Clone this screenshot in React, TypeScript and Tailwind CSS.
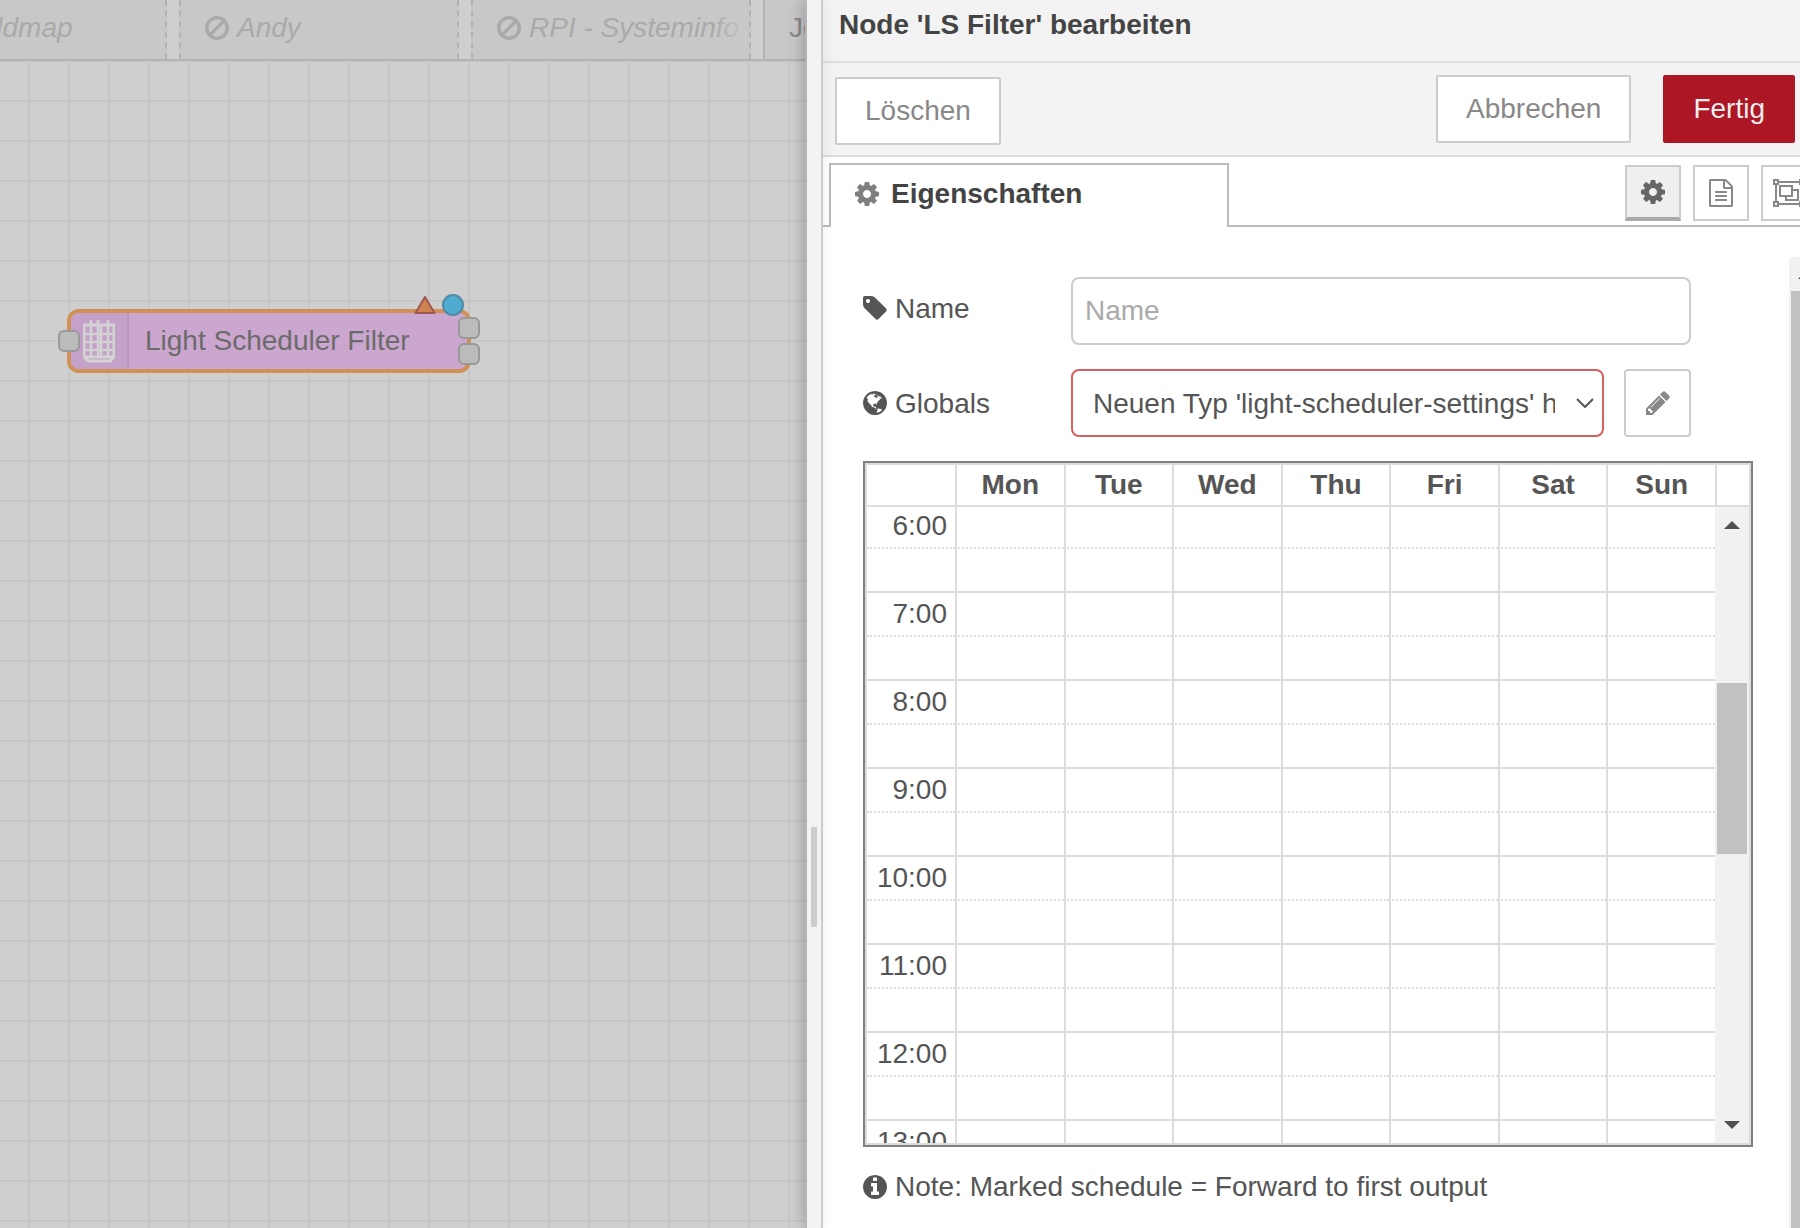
import React from 'react';

const days = ['Mon', 'Tue', 'Wed', 'Thu', 'Fri', 'Sat', 'Sun'];
const hours = ['6:00', '7:00', '8:00', '9:00', '10:00', '11:00', '12:00', '13:00'];

// Font Awesome 4 glyphs
const paths = {
  cog: 'M1152 896q0-106-75-181t-181-75-181 75-75 181 75 181 181 75 181-75 75-181zm512-109v222q0 12-8 23t-20 13l-185 28q-19 54-39 91 35 50 107 138 10 12 10 25t-9 23q-27 37-99 108t-94 71q-12 0-26-9l-138-108q-44 23-91 38-16 136-29 186-7 28-36 28h-222q-14 0-24.500-8.500t-11.500-21.500l-28-184q-49-16-90-37l-141 107q-10 9-25 9-14 0-25-11-126-114-165-168-7-10-7-23 0-12 8-23 15-21 51-66.500t54-70.500q-27-50-41-99l-183-27q-13-2-21-12.500t-8-23.500v-222q0-12 8-23t19-13l186-28q14-46 39-92-40-57-107-138-10-12-10-24 0-10 9-23 26-36 98.500-107.500t94.500-71.500q13 0 26 10l138 107q44-23 91-38 16-136 29-186 7-28 36-28h222q14 0 24.500 8.500t11.500 21.500l28 184q49 16 90 37l142-107q9-9 24-9 13 0 25 10 129 119 165 170 7 8 7 22 0 12-8 23-15 21-51 66.500t-54 70.500q26 50 41 98l183 28q13 2 21 12.500t8 23.500z',
  tag: 'M576 448q0-53-37.5-90.5t-90.5-37.5-90.5 37.5-37.5 90.5 37.5 90.5 90.5 37.5 90.5-37.5 37.5-90.5zm1067 576q0 53-37 90l-491 492q-39 37-91 37-53 0-90-37l-715-716q-38-37-64.5-101t-26.5-117v-416q0-52 38-90t90-38h416q53 0 117 26.5t102 64.5l715 714q37 39 37 91z',
  pencil: 'M491 1536l91-91-235-235-91 91v107h128v128h107zm523-928q0-22-22-22-10 0-17 7l-542 542q-7 7-7 17 0 22 22 22 10 0 17-7l542-542q7-7 7-17zm-54-192l416 416-832 832h-416v-416zm683 96q0 53-37 90l-166 166-416-416 166-165q36-38 90-38 53 0 91 38l235 234q37 39 37 91z',
  info: 'M1152 1376v-160q0-14-9-23t-23-9h-96v-512q0-14-9-23t-23-9h-320q-14 0-23 9t-9 23v160q0 14 9 23t23 9h96v320h-96q-14 0-23 9t-9 23v160q0 14 9 23t23 9h448q14 0 23-9t9-23zm-128-896v-160q0-14-9-23t-23-9h-192q-14 0-23 9t-9 23v160q0 14 9 23t23 9h192q14 0 23-9t9-23zm640 416q0 209-103 385.5t-279.5 279.5-385.5 103-385.5-103-279.5-279.5-103-385.5 103-385.5 279.5-279.5 385.5-103 385.5 103 279.5 279.5 103 385.5z',
  ban: 'M1440 893q0-161-87-295l-754 753q137 89 297 89 111 0 211.5-43.5t173.5-116.5 116-174.5 43-212.5zm-999 299l755-754q-135-91-300-91-148 0-273 73t-198 199-73 274q0 162 89 299zm1223-299q0 157-61 300t-163.5 246-245 164-298.5 61-298.5-61-245-164-163.5-246-61-300 61-299.5 163.5-245.5 245-164 298.5-61 298.5 61 245 164 163.5 245.5 61 299.5z',
  file: 'M1596 380q28 28 48 76t20 88v1152q0 40-28 68t-68 28h-1344q-40 0-68-28t-28-68v-1600q0-40 28-68t68-28h896q40 0 88 20t76 48zm-444-244v376h376q-10-29-22-41l-313-313q-12-12-41-22zm384 1528v-1024h-416q-40 0-68-28t-28-68v-416h-768v1536h1280zm-1024-864q0-14 9-23t23-9h704q14 0 23 9t9 23v64q0 14-9 23t-23 9h-704q-14 0-23-9t-9-23v-64zm736 224q14 0 23 9t9 23v64q0 14-9 23t-23 9h-704q-14 0-23-9t-9-23v-64q0-14 9-23t23-9h704zm0 256q14 0 23 9t9 23v64q0 14-9 23t-23 9h-704q-14 0-23-9t-9-23v-64q0-14 9-23t23-9h704z',
  globe: 'M896 128q209 0 385.5 103t279.5 279.5 103 385.5-103 385.5-279.5 279.5-385.5 103-385.5-103-279.5-279.5-103-385.5 103-385.5 279.5-279.5 385.5-103zm274 521q-2 1-9.5 9.5t-13.5 9.5q2 0 4.5-5t5-11 3.5-7q6-7 22-15 14-6 52-12 34-8 51 11-2-2 9.5-13t14.5-12q3-2 15-4.5t15-7.5l2-22q-12 1-17.5-7t-6.5-21q0 2-6 8 0-7-4.5-8t-11.5 1-9 1q-10-3-15-7.5t-8-16.5-4-15q-2-5-9.5-11t-9.5-10q-1-2-2.5-5.5t-3-6.5-4-5.5-5.5-2.5-7 5-7.5 10-4.5 5q-3-2-6-1.5t-4.5 1-4.5 3-5 3.5q-3 2-8.5 3t-8.5 2q15-5-1-11-10-4-16-3 9-4 7.5-12t-8.5-14h5q-1-4-8.5-8.5t-17.5-8.5-13-6q-8-5-34-9.5t-33-.5q-5 6-4.5 10.5t4 14 3.5 12.5q1 6-5.5 13t-6.5 12q0 7 14 15.5t10 21.5q-3 8-16 16t-16 12q-5 8-1.5 18.5t10.5 16.5q2 2 1.5 4t-3.5 4.5-5.5 4-6.5 3.5l-3 2q-11 5-20.5-6t-13.5-26q-7-25-16-30-23-8-29 1-5-13-41-26-25-9-58-4 6-1 0-15-7-15-19-12 3-6 4-17.5t1-13.5q3-13 12-23 1-1 7-8.5t9.5-13.5.5-6q35 4 50-11 5-5 11.5-17t10.5-17q9-6 14-5.5t14.5 5.5 14.5 5q14 1 15.5-11t-7.5-20q12 1 3-17-4-7-8-9-12-4-27 5-8 4 2 8-1-1-9.5 10.5t-16.5 17.5-16-5q-1-1-5.5-13.5t-9.5-13.5q-8 0-16 15 3-8-11-15t-24-8q19-12-8-27-7-4-20.5-5t-19.5 4q-5 7-5.5 11.5t5 8 10.5 5.5 11.5 4 8.5 3q14 10 8 14-2 1-8.5 3.5t-11.5 4.5-6 4q-3 4 0 14t-2 14q-5-5-9-17.5t-7-16.5q7 9-25 6l-10-1q-4 0-16 2t-20.5 1-13.5-8q-4-8 0-20 1-4 4-2-4-3-11-9.5t-10-8.5q-46 15-94 41 6 1 12-1 5-2 13-6.5t10-5.5q34-14 42-7l5-5q14 16 20 25-7-4-30-1-20 6-22 12 7 12 5 18-4-3-11.5-10t-14.5-11-15-5q-16 0-22 1-146 80-235 222 7 7 12 8 4 1 5 9t2.5 11 11.5-3q9 8 3 19 1-1 44 27 19 17 21 21 3 11-10 18-1-2-9-9t-9-4q-3 5 .5 18.5t10.5 12.5q-7 0-9.5 16t-2.5 35.5-1 23.5l2 1q-3 12 5.5 34.5t21.5 19.5q-13 3 20 43 6 8 8 9 3 2 12 7.5t15 10 10 10.5q4 5 10 22.5t14 23.5q-2 6 9.5 20t10.5 23q-1 0-2.5 1t-2.5 1q3 7 15.5 14t15.5 13q1 3 2 10t3 11 8 2q2-20-24-62-15-25-17-29-3-5-5.500-15.500t-4.500-14.500q2 0 6 1.500t8.500 3.500 7.500 4 2 3q-3 7 2 17.500t12 18.500 17 19 12 13q6 6 14 19.500t0 13.500q9 0 20 10.500t17 19.500q5 8 8 26t5 24q2 7 8.500 13.500t12.500 9.500l16 8 13 7q5 2 18.500 10.500t21.500 11.500q10 4 16 4t14.500-2.500 13.500-3.500q15-2 29 15t21 21q36 19 55 11-2 1 .5 7.500t8 15.500 9 14.500 5.500 8.500q5 6 18 15t18 15q6-4 7-9-3 8 7 20t18 10q14-3 14-32-31 15-49-18 0-1-2.500-5.500t-4-8.500-2.500-8.500 0-7.500 5-3q9 0 10-3.500t-2-12.500-4-13q-1-8-11-20t-12-15q-5 9-16 8t-16-9q0 1-1.500 5.500t-1.500 6.500q-13 0-15-1 1-3 2.500-17.500t3.500-22.500q1-4 5.500-12t7.500-14.500 4-12.500-4.500-9.500-17.500-2.500q-19 1-26 20-1 3-3 10.500t-5 11.500-9 7q-7 3-24 2t-24-5q-13-8-22.500-29t-9.500-37q0-10 2.500-26.500t3-25-5.500-24.500q3-2 9-9.500t10-10.500q2-1 4.500-1.500t4.500 0 4-1.500 3-6q-1-1-4-3-3-3-4-3 7 3 28.500-1.500t27.500 1.500q15 11 22-2 0-1-2.500-9.500t-.5-13.500q5 27 29 9 3 3 15.500 5t17.500 5q3 2 7 5.500t5.500 4.500 5-.5 8.500-6.500q10 14 12 24 11 40 19 44 7 3 11 2t4.500-9.500 0-14-1.500-12.500l-1-8v-18l-1-8q-15-3-18.500-12t1.500-18.500 15-18.500q1-1 8-3.500t15.500-6.500 12.500-8q21-19 15-35 7 0 11-9-1 0-5-3t-7.500-5-4.500-2q9-5 2-16 5-3 7.500-11t7.500-10q9 12 21 2 8-8 1-16 5-7 20.500-10.500t18.500-9.500q7 2 8-2t1-12 3-12q4-5 15-9t13-5l17-11q3-4 0-4 18 2 31-11 10-11-6-20 3-6-3-9.500t-15-5.500q3-1 11.500-.5t10.500-1.500q15-10-7-16-17-5-43 12zm-163 877q206-36 351-189-3-3-12.500-4.500t-12.500-3.500q-18-7-24-8 1-7-2.500-13t-8-9-12.500-8-11-7q-2-2-7-6t-7-5.500-7.500-4.500-8.500-2-10 1l-3 1q-3 1-5.500 2.500t-5.500 3-4 3 0 2.500q-21-17-36-22-5-1-11-5.500t-10.500-7-10-1.500-11.500 7q-5 5-6 15t-2 13q-7-5 0-17.500t2-18.500q-3-6-10.500-4.500t-12 4.500-11.500 8.500-9 6.500-8.500 5.500-8.500 7.500q-3 4-6 12t-5 11q-2-4-11.500-6.500t-9.500-5.500q2 10 4 35t5 38q7 31-12 48-27 25-29 40-4 22 12 26 0 7-8 20.500t-7 21.500q0 6 2 16z',
};

const Icon = ({ name, className = '' }: { name: keyof typeof paths; className?: string }) => (
  <svg viewBox="0 0 1792 1792" fill="currentColor" aria-hidden="true" className={`-mx-[2px] size-7 shrink-0 ${className}`}>
    <path d={paths[name]} />
  </svg>
);

const ObjectGroupIcon = () => (
  <svg viewBox="0 0 2048 1792" fill="currentColor" fillRule="evenodd" aria-hidden="true" className="h-7 w-8 shrink-0">
    <path d="M0 0h384v128h1280v-128h384v384h-128v1024h128v384h-384v-128h-1280v128h-384v-384h128v-1024h-128zM128 128v128h128v-128zM1792 128v128h128v-128zM128 1536v128h128v-128zM1792 1536v128h128v-128zM256 384v1024h128v128h1280v-128h128v-1024h-128v-128h-1280v128z" />
    <path d="M384 384h896v256h384v768h-896v-256h-384zM512 512v512h640v-512zM896 1152v128h640v-512h-256v384z" />
  </svg>
);

const Arrow = ({ up }: { up?: boolean }) => (
  <svg viewBox="0 0 16 8" aria-hidden="true" className="h-2 w-4 fill-[#505050]">
    <path d={up ? 'M0 8L8 0L16 8z' : 'M0 0L8 8L16 0z'} />
  </svg>
);

const FlowTab = ({ label, className = '' }: { label: string; className?: string }) => (
  <a
    href="#flow"
    className={`relative flex w-[280px] shrink-0 items-center gap-2 overflow-hidden border-x-2 border-dashed border-[#b3b3b3] bg-[#c8c8c8] pb-1 pl-6 italic whitespace-nowrap text-[#aaaaaa] ${className}`}
  >
    <Icon name="ban" />
    {label}
    <span className="absolute inset-y-0 right-0 w-9 bg-linear-to-r from-[#c8c8c8]/0 to-[#c8c8c8]" />
  </a>
);

const port = 'absolute size-[22px] rounded-md border-2 border-[#999999] bg-[#bbbbbb]';

const FlowNode = () => (
  <div className="absolute top-[248px] left-[67px] flex h-16 w-[404px] items-center rounded-xl border-4 border-[#d19055] bg-[#cba6cf] text-[#6b6b6b]">
    <div className="flex h-full w-[58px] items-center justify-center rounded-l-lg border-r-2 border-[#b998bd] bg-[#c4a1c8]">
      <svg viewBox="0 0 32 44" fill="none" stroke="#d3d3d3" aria-hidden="true" className="h-11 w-8">
        <path strokeWidth="3" d="M1 6H31V38L27 42H5L1 38ZM1 38H31" />
        <path strokeWidth="2.500" d="M8 1V38M15 1V38M18 6V38M25 1V38M1 15H31M1 23H31M1 31H31" />
      </svg>
    </div>
    <span className="pl-4 whitespace-nowrap">Light Scheduler Filter</span>
    <span className={`${port} top-[17px] -left-[13px]`} />
    <span className={`${port} top-1 -right-[13px]`} />
    <span className={`${port} top-[30px] -right-[13px]`} />
    <svg viewBox="0 0 50 24" aria-hidden="true" className="absolute -top-5 right-[3px] h-6 w-[50px]">
      <path d="M11 4L20.500 20H1.500Z" fill="#cf834f" stroke="#a0564e" strokeWidth="2" strokeLinejoin="round" />
      <circle cx="39" cy="12" r="10" fill="#4fabd0" stroke="#4f8ba3" strokeWidth="2" />
    </svg>
  </div>
);

const Workspace = () => (
  <section className="flex min-w-0 flex-[805] flex-col overflow-hidden bg-[#cfcfcf]">
    <nav className="flex h-[61px] shrink-0 gap-3 border-b-2 border-[#b3b3b3]">
      <FlowTab label="Worldmap" className="-ml-[113px]" />
      <FlowTab label="Andy" />
      <FlowTab label="RPI - Systeminfo" />
      <a href="#flow" className="flex w-[280px] shrink-0 items-center border-l-2 border-[#b3b3b3] bg-[#c8c8c8] pb-1 pl-6 text-[#8b8b8b]">
        Jo
      </a>
    </nav>
    <div className="relative flex-1 bg-[linear-gradient(to_right,#c6c6c6_2px,transparent_2px),linear-gradient(to_bottom,#c6c6c6_2px,transparent_2px)] bg-[length:40px_40px] bg-[position:28px_-1px]">
      <FlowNode />
    </div>
  </section>
);

const Schedule = () => (
  <div className="mt-6 flex h-[686px] border-2 border-[#808080]">
    <div className="flex min-w-0 flex-1 border-2 border-[#dddddd]">
      <div className="min-w-0 flex-1 overflow-hidden">
        <table className="w-full table-fixed border-separate border-spacing-0">
          <thead>
            <tr className="h-[42px]">
              <th className="w-[88px] border-b-2 border-[#dddddd] p-0"></th>
              {days.map((day) => (
                <th key={day} className="border-b-2 border-l-2 border-[#dddddd] p-0 leading-10 font-bold">
                  {day}
                </th>
              ))}
            </tr>
          </thead>
          <tbody>
            {hours.map((hour, i) => (
              <React.Fragment key={hour}>
                <tr className={i === 0 ? 'h-[42px]' : 'h-11'}>
                  <td className="border-b-2 border-dotted border-[#dddddd] p-0 pr-2 pb-[2px] text-right align-bottom leading-[38px]">{hour}</td>
                  {days.map((day) => (
                    <td key={day} className="border-b-2 border-l-2 border-[#dddddd] p-0 [border-bottom-style:dotted]"></td>
                  ))}
                </tr>
                <tr className="h-11">
                  <td className="border-b-2 border-[#dddddd] p-0"></td>
                  {days.map((day) => (
                    <td key={day} className="border-b-2 border-l-2 border-[#dddddd] p-0"></td>
                  ))}
                </tr>
              </React.Fragment>
            ))}
          </tbody>
        </table>
      </div>
      <div className="flex w-[34px] flex-col">
        <div className="h-[42px] border-b-2 border-l-2 border-[#dddddd]" />
        <div className="flex flex-1 flex-col items-center bg-[#f1f1f1] py-[14px]">
          <Arrow up />
          <div className="mt-[154px] mb-auto h-[171px] w-[30px] bg-[#c1c1c1]" />
          <Arrow />
        </div>
      </div>
    </div>
  </div>
);

const toolButton = 'flex size-14 shrink-0 items-center justify-center border-2 border-[#cccccc] text-[#888888]';
const trayButton = 'h-[68px] rounded-xs border-2 border-[#cccccc] bg-white px-7 text-[#888888]';

const App = () => {
  return (
    <div className="flex h-screen overflow-hidden bg-white font-['Liberation_Sans',Arial,sans-serif] text-[28px] text-[#555555]">
      <Workspace />

      <main className="relative flex min-w-0 flex-[993] border-l-2 border-[#bbbbbb] shadow-[0_0_16px_rgba(0,0,0,0.25)]">
        <div className="relative z-10 flex w-4 shrink-0 items-center border-r-2 border-[#cccccc] bg-[#f3f3f3] pt-[526px] pl-1 shadow-[0_0_14px_rgba(0,0,0,0.08)]">
          <div className="mb-[301px] h-[100px] w-[6px] self-end bg-[#cccccc]" />
        </div>

        <div className="flex min-w-0 flex-1 flex-col overflow-hidden">
          <header className="h-[63px] shrink-0 border-b-2 border-[#dddddd] bg-[#f3f3f3] pl-4">
            <h1 className="leading-[50px] font-bold text-[#444444]">Node 'LS Filter' bearbeiten</h1>
          </header>

          <div className="flex h-[94px] shrink-0 items-start border-b-2 border-[#dddddd] bg-[#f3f3f3] pt-3 pr-[5px] pl-3">
            <button className={`${trayButton} mt-[2px]`}>Löschen</button>
            <button className={`${trayButton} mr-8 ml-auto`}>Abbrechen</button>
            <button className="h-[68px] rounded-xs bg-[#ad1625] px-[30px] text-[#eeeeee]">Fertig</button>
          </div>

          <div className="flex h-[70px] shrink-0 pt-[6px]">
            <div className="w-[6px] border-b-2 border-[#bbbbbb]" />
            <a href="#properties" className="flex w-[400px] items-center gap-3 border-2 border-b-0 border-[#bbbbbb] pb-1 pl-6 font-bold text-[#444444]">
              <Icon name="cog" className="text-[#7f7f7f]" />
              Eigenschaften
            </a>
            <div className="flex flex-1 justify-end gap-3 border-b-2 border-[#bbbbbb] pt-[2px]">
              <button aria-label="Eigenschaften" className="flex size-14 shrink-0 items-center justify-center border-2 border-b-4 border-[#cccccc] border-b-[#aaaaaa] bg-[#efefef] text-[#666666]">
                <Icon name="cog" />
              </button>
              <button aria-label="Beschreibung" className={toolButton}>
                <Icon name="file" />
              </button>
              <button aria-label="Darstellung" className={`${toolButton} -mr-[17px]`}>
                <ObjectGroupIcon />
              </button>
            </div>
          </div>

          <div className="flex min-h-0 flex-1 pt-[30px]">
            <form className="min-w-0 flex-1 pt-5 pr-9 pl-10">
              <div className="mr-[62px] flex h-[68px] items-center">
                <label htmlFor="node-name" className="flex w-[208px] items-center gap-2 pb-[6px]">
                  <Icon name="tag" />
                  <span className="pt-[2px]">Name</span>
                </label>
                <input
                  id="node-name"
                  type="text"
                  placeholder="Name"
                  className="h-full min-w-0 flex-1 rounded-lg border-2 border-[#cccccc] px-3 placeholder:text-[#aaaaaa]"
                />
              </div>

              <div className="mt-6 mr-[62px] flex h-[68px] items-center">
                <label htmlFor="node-globals" className="flex w-[208px] items-center gap-2">
                  <Icon name="globe" />
                  <span className="pt-[2px]">Globals</span>
                </label>
                <div className="relative h-full min-w-0 flex-1">
                  <select id="node-globals" className="h-full w-full appearance-none rounded-lg border-2 border-[#d6615f] bg-white pt-[2px] pr-[47px] pl-5">
                    <option>Neuen Typ 'light-scheduler-settings' hinzufügen...</option>
                  </select>
                  <svg viewBox="0 0 18 10" fill="none" stroke="#555555" strokeWidth="2" aria-hidden="true" className="pointer-events-none absolute top-[29px] right-[10px] h-[10px] w-[18px]">
                    <path d="M1 1L9 9L17 1" />
                  </svg>
                </div>
                <button type="button" aria-label="Globals bearbeiten" className="ml-5 flex h-full w-[67px] items-center justify-center rounded-sm border-2 border-[#cccccc] text-[#888888]">
                  <Icon name="pencil" />
                </button>
              </div>

              <Schedule />

              <p className="mt-5 flex items-center gap-2 leading-10">
                <Icon name="info" />
                <span>Note: Marked schedule = Forward to first output</span>
              </p>
            </form>

            <div className="-mr-[23px] flex w-[34px] shrink-0 flex-col items-center bg-[#f1f1f1] pt-[14px]">
              <Arrow up />
              <div className="mt-3 w-[30px] flex-1 bg-[#c1c1c1]" />
            </div>
          </div>
        </div>
      </main>
    </div>
  );
};

export default App;
